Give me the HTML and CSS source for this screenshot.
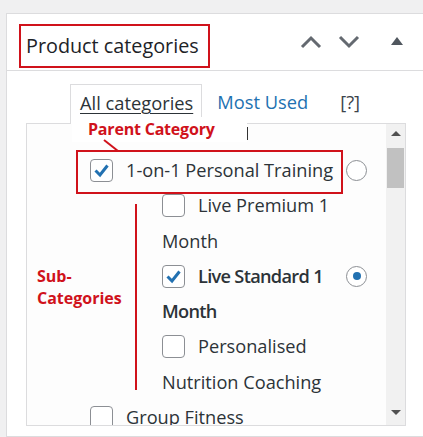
FILE: index.html
```html
<!DOCTYPE html>
<html>
<head>
<meta charset="utf-8">
<link rel="stylesheet" href="styles.css">
</head>
<body>
<div class="postbox">
  <div class="postbox-header">
    <h2 class="hndle">Product categories</h2>
    <div class="handle-actions">
      <svg class="act" width="22" height="14" viewBox="0 0 22 14"><polyline points="2,12 11,3 20,12" fill="none" stroke="#646970" stroke-width="3"/></svg>
      <svg class="act" width="22" height="14" viewBox="0 0 22 14"><polyline points="2,2 11,11 20,2" fill="none" stroke="#646970" stroke-width="3"/></svg>
      <svg class="act tri" width="14" height="10" viewBox="0 0 14 10"><polygon points="1,9 7,1 13,9" fill="#50575e"/></svg>
    </div>
  </div>
  <div class="inside">
    <ul class="tabs">
      <li class="tab active"><span class="tab-link">All categories</span></li>
      <li class="tab tab-2"><span class="tab-link blue">Most Used</span></li>
      <li class="tab tab-3"><span class="tab-link help">[?]</span></li>
    </ul>
    <div class="panel">
      <div class="list">
        <ul class="cats">
          <li class="cat">
            <div class="row">
              <label class="lbl"><span class="cb checked"><svg width="21" height="21" viewBox="0 0 21 21"><polyline points="4.5,10.5 9,15 16.5,5.5" fill="none" stroke="#2271b1" stroke-width="3"/></svg></span>1-on-1 Personal Training</label>
              <span class="radio"></span>
            </div>
            <ul class="children">
              <li class="cat">
                <div class="row">
                  <label class="lbl"><span class="cb"></span>Live Premium 1 Month</label>
                  <span class="radio-slot"></span>
                </div>
              </li>
              <li class="cat">
                <div class="row">
                  <label class="lbl bold"><span class="cb checked"><svg width="21" height="21" viewBox="0 0 21 21"><polyline points="4.5,10.5 9,15 16.5,5.5" fill="none" stroke="#2271b1" stroke-width="3"/></svg></span>Live Standard 1 Month</label>
                  <span class="radio on"><span class="dot"></span></span>
                </div>
              </li>
              <li class="cat">
                <div class="row">
                  <label class="lbl"><span class="cb"></span>Personalised Nutrition Coaching</label>
                  <span class="radio-slot"></span>
                </div>
              </li>
            </ul>
          </li>
          <li class="cat">
            <div class="row">
              <label class="lbl"><span class="cb"></span>Group Fitness</label>
              <span class="radio-slot"></span>
            </div>
          </li>
        </ul>
      </div>
      <div class="sbar">
        <span class="arrow up"></span>
        <span class="thumb"></span>
        <span class="track"></span>
        <span class="arrow down"></span>
      </div>
    </div>
  </div>
</div>

<div class="anno-label parent-label">Parent Category</div>
<span class="caret"></span>
<svg class="anno-arrow" width="20" height="14" viewBox="0 0 20 14"><line x1="2" y1="1" x2="16" y2="12" stroke="#d0121b" stroke-width="2"/></svg>
<div class="anno-box parent-box"></div>
<div class="anno-vline"></div>
<div class="anno-label sub-label">Sub-<br>Categories</div>
</body>
</html>
```
FILE: styles.css
```css
html, body {
  margin: 0;
  padding: 0;
}
body {
  background: #f0f0f1;
  width: 423px;
  height: 437px;
  overflow: hidden;
  position: relative;
  font-family: "Open Sans", "Noto Sans", sans-serif;
  color: #2c3338;
}
ul { list-style: none; margin: 0; padding: 0; }

.postbox {
  margin: 13px 0 0 6px;
  width: 417px;
  height: 424px;
  background: #fff;
  border: 1px solid #dcdcde;
  border-right: none;
  box-sizing: border-box;
  overflow: hidden;
}
.postbox-header {
  height: 57px;
  box-sizing: border-box;
  border-bottom: 1px solid #dcdcde;
  display: flex;
  align-items: flex-start;
}
.hndle {
  margin: 10px 0 0 12px;
  height: 44px;
  width: 191px;
  flex: none;
  box-sizing: border-box;
  border: 2px solid #d0121b;
  padding: 0 0 0 5px;
  font-size: 19.8px;
  font-weight: 400;
  line-height: 40px;
  color: #1d2327;
  white-space: nowrap;
  overflow: hidden;
}
.handle-actions {
  display: flex;
  align-items: center;
  margin: 21px 0 0 90px;
  gap: 16px;
}
.act { display: block; }
.tri { margin-left: 14px; margin-top: -2px; }

.inside {
  padding: 13px 0 0 19px;
}
.tabs {
  display: flex;
  align-items: flex-end;
  margin-left: 44px;
  height: 39px;
}
.tab {
  height: 39px;
  display: flex;
  align-items: flex-start;
  font-size: 18.3px;
  white-space: nowrap;
}
.tab.active {
  position: relative;
  z-index: 2;
  height: 40px;
  margin-bottom: -1px;
  padding: 0 8px 0 9px;
  background: #fff;
  border: 1px solid #dcdcde;
  border-bottom: none;
  box-sizing: border-box;
}
.tab-2 { margin-left: 15px; }
.tab-3 { margin-left: 32px; }
.tab-link { line-height: 35px; }
.tab.active .tab-link {
  text-decoration: underline;
  text-underline-offset: 3px;
  text-decoration-thickness: 1px;
  color: #2c3338;
}
.blue { color: #2271b1; }
.help { color: #3c434a; }

.panel {
  width: 380px;
  height: 303px;
  box-sizing: border-box;
  border: 1px solid #dcdcde;
  background: #fdfdfd;
  display: flex;
}
.list {
  flex: 1;
  overflow: hidden;
  padding: 29px 19px 0 63px;
}
.cats {
  font-size: 18.2px;
  line-height: 35.3px;
  color: #2c3338;
  white-space: normal;
}
.row {
  display: flex;
  align-items: flex-start;
}
.lbl {
  flex: 1;
  min-width: 0;
}
.lbl.bold {
  font-weight: 600;
  letter-spacing: -0.7px;
}
.children { margin-left: 72px; }
.children .lbl { max-width: 180px; }
.cb {
  display: inline-block;
  width: 23px;
  height: 23px;
  box-sizing: border-box;
  border: 1px solid #8c8f94;
  border-radius: 4px;
  background: #fff;
  vertical-align: middle;
  margin: -4px 13px 0 0;
  position: relative;
}
.cb svg { display: block; }
.radio, .radio-slot {
  flex: none;
  width: 21px;
  height: 21px;
  margin-top: 7px;
  margin-left: 6px;
  box-sizing: border-box;
}
.radio {
  border: 1px solid #8c8f94;
  border-radius: 50%;
  background: #fff;
  display: flex;
  align-items: center;
  justify-content: center;
}
.dot {
  width: 8px;
  height: 8px;
  border-radius: 50%;
  background: #2271b1;
}

.sbar {
  width: 19px;
  flex: none;
  background: #f1f1f1;
  display: flex;
  flex-direction: column;
  align-items: center;
}
.arrow {
  width: 0;
  height: 0;
  border-left: 5px solid transparent;
  border-right: 5px solid transparent;
}
.arrow.up {
  border-bottom: 5px solid #505050;
  margin-top: 7px;
}
.arrow.down {
  border-top: 5px solid #505050;
  margin-bottom: 10px;
}
.thumb {
  width: 17px;
  height: 40px;
  background: #c1c1c1;
  margin-top: 12px;
}
.track { flex: 1; }

/* annotations overlay */
.anno-label {
  position: absolute;
  color: #d0121b;
  font-weight: 700;
  font-size: 16px;
  font-family: "Open Sans", "Noto Sans", sans-serif;
}
.parent-label {
  left: 72px;
  top: 117px;
  width: 175px;
  height: 25px;
  padding-left: 16px;
  box-sizing: border-box;
  background: #fff;
  line-height: 24px;
  z-index: 3;
  letter-spacing: -0.2px;
  white-space: nowrap;
}
.caret {
  position: absolute;
  left: 247px;
  top: 127px;
  width: 1px;
  height: 13px;
  background: #333;
  z-index: 4;
}
.anno-arrow {
  position: absolute;
  left: 102px;
  top: 139px;
  z-index: 4;
}
.anno-box {
  position: absolute;
  border: 2px solid #d0121b;
  box-sizing: border-box;
}
.parent-box {
  left: 76px;
  top: 150px;
  width: 267px;
  height: 44px;
}
.anno-vline {
  position: absolute;
  left: 135px;
  top: 204px;
  width: 2px;
  height: 186px;
  background: #d0121b;
}
.sub-label {
  left: 37px;
  top: 265px;
  line-height: 22px;
}
```
